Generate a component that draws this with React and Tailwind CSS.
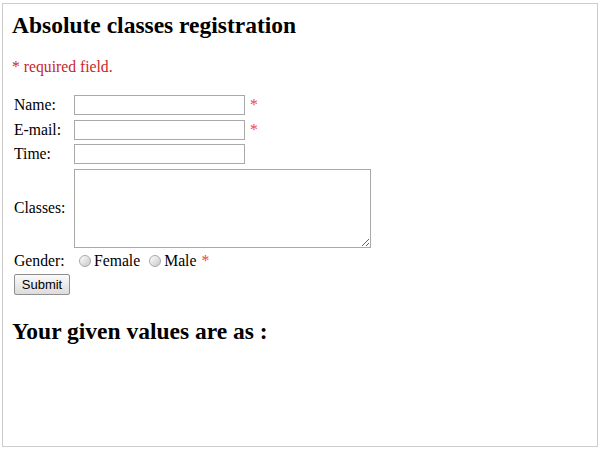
import React from 'react'

function Star() {
  return <span className="ml-[5px] text-[#f0413f]">*</span>
}

function Radio({ label }) {
  return (
    <label className="flex items-center">
      <span className="h-[12px] w-[12px] rounded-full border border-[#a8a8a8] bg-linear-to-br from-white to-[#c8c8c8]" />
      <span className="ml-[3px]">{label}</span>
    </label>
  )
}

export default function App() {
  const serif = { fontFamily: '"Liberation Serif", "Times New Roman", serif' }
  return (
    <div className="min-h-[450px] bg-white" style={serif}>
      <div className="ml-[2px] mt-[3px] h-[444px] w-[596px] border border-[#cccccc] pl-[9px] pt-[8px] text-[15.7px] leading-[18px] text-black">
        <h2 className="text-[23.5px] font-bold leading-[26px]">Absolute classes registration</h2>
        <p className="mt-[20px] text-[#c8262a]">* required field.</p>

        {/* Form */}
        <div className="mt-[19px] flex flex-col gap-[4.5px] pl-[2px]">
          <div className="flex items-center">
            <span className="w-[60px]">Name:</span>
            <input type="text" className="h-[20px] w-[171px] border border-[#a9a9a9] bg-white outline-none" />
            <Star />
          </div>
          <div className="flex items-center">
            <span className="w-[60px]">E-mail:</span>
            <input type="text" className="h-[20px] w-[171px] border border-[#a9a9a9] bg-white outline-none" />
            <Star />
          </div>
          <div className="flex items-center">
            <span className="w-[60px]">Time:</span>
            <input type="text" className="h-[20px] w-[171px] border border-[#a9a9a9] bg-white outline-none" />
          </div>
          <div className="flex items-center">
            <span className="w-[60px]">Classes:</span>
            <textarea className="h-[79px] w-[297px] border border-[#a9a9a9] bg-white outline-none" />
          </div>
        </div>

        <div className="mt-[4px] flex h-[18px] items-center pl-[2px]">
          <span className="w-[65px]">Gender:</span>
          <Radio label="Female" />
          <span className="w-[9px]" />
          <Radio label="Male" />
          <Star />
        </div>

        <button
          className="ml-[2px] mt-[4px] h-[21px] w-[56px] rounded-[2px] border border-[#8f8f8f] bg-linear-to-b from-[#fafafa] to-[#dcdcdc] text-[13px] leading-none"
          style={{ fontFamily: '"Liberation Sans", Arial, sans-serif' }}
        >
          Submit
        </button>

        <h2 className="mt-[23px] text-[23.5px] font-bold leading-[26px]">Your given values are as :</h2>
      </div>
    </div>
  )
}
